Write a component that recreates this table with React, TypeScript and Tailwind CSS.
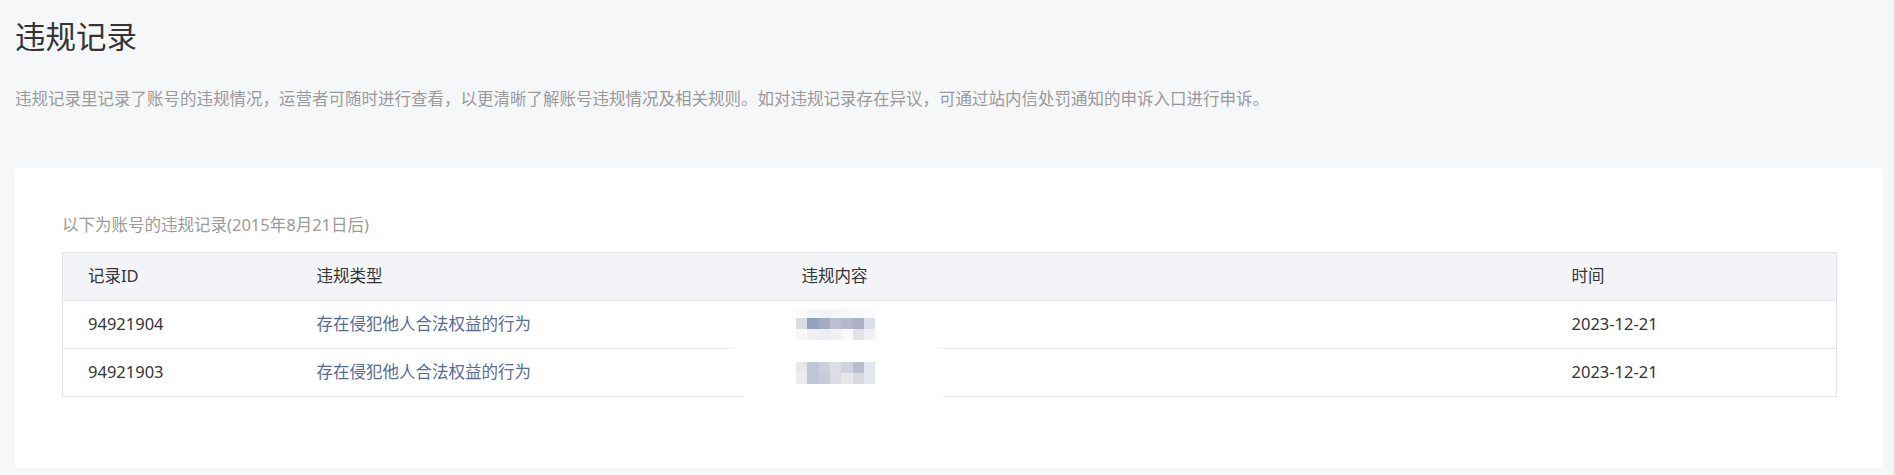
import React from "react";

const mosaic1: string[][] = [
  ["#fbfbfc", "#f5f5f8", "#f2f2f5", "#f5f5f7", "#f7f7f9", "#f9f9fa", "#fbfbfd"],
  ["#dcdce3", "#95a2bf", "#a7abc1", "#bcbfd0", "#b4b8cb", "#aeb2c3", "#dce0eb"],
  ["#f8f8f9", "#eef0f4", "#edeef2", "#eff0f3", "#fafafb", "#e3e4e9", "#eef0f5"],
];
const mosaic2: string[][] = [
  ["#e8e8ec", "#c0c6d8", "#cdd0dc", "#dcdde6", "#d0d3de", "#b9bdcc", "#e3e7f0"],
  ["#ececef", "#c0c4d6", "#c8cad8", "#d9dbe5", "#e6e7ec", "#d9dae1", "#e2e6ef"],
];

function Mosaic({ rows, heights }: { rows: string[][]; heights: number[] }) {
  const bw = 11.3;
  const total = heights.reduce((a, b) => a + b, 0);
  let y = 0;
  return (
    <svg width={Math.round(bw * 7)} height={total} className="block" shapeRendering="crispEdges">
      {rows.map((r, ri) => {
        const yy = y;
        y += heights[ri];
        return r.map((c, ci) => (
          <rect key={ri + "-" + ci} x={ci * bw} y={yy} width={bw + 0.5} height={heights[ri]} fill={c} />
        ));
      })}
    </svg>
  );
}

const records = [
  { id: "94921904", type: "存在侵犯他人合法权益的行为", time: "2023-12-21", m: 1 },
  { id: "94921903", type: "存在侵犯他人合法权益的行为", time: "2023-12-21", m: 2 },
];

export default function App() {
  return (
    <div className="min-h-[475px] w-full bg-[#f6f7f9] border-r-2 border-[#e9eaed] pl-[15px] pr-[10px] font-['Noto_Sans','Noto_Sans_CJK_SC',sans-serif]">
      <h1 className="pt-[14px] text-[30.5px] leading-[44px] font-normal text-[#353535]">违规记录</h1>
      <p className="mt-[29px] text-[16.5px] leading-[24px] text-[#9a9a9a]">
        违规记录里记录了账号的违规情况，运营者可随时进行查看，以更清晰了解账号违规情况及相关规则。如对违规记录存在异议，可通过站内信处罚通知的申诉入口进行申诉。
      </p>
      <div className="mt-[57px] bg-white rounded-[4px] pl-[47px] pr-[46px] pt-[45px] pb-[71px]">
        <p className="text-[16.5px] leading-[24px] text-[#9a9a9a]">以下为账号的违规记录(2015年8月21日后)</p>
        <table className="mt-[15px] w-full table-fixed border-collapse border border-[#e2e3e7] text-[16.5px] text-[#353535]">
          <colgroup>
            <col className="w-[229px]" />
            <col className="w-[485px]" />
            <col className="w-[770px]" />
            <col />
          </colgroup>
          <thead>
            <tr className="bg-[#f3f4f7] border-b border-[#e5e6ea]">
              <th className="h-[48px] pl-[25px] text-left font-normal">记录ID</th>
              <th className="h-[48px] pl-[25px] text-left font-normal">违规类型</th>
              <th className="h-[48px] pl-[25px] text-left font-normal">违规内容</th>
              <th className="h-[48px] pl-[25px] text-left font-normal">时间</th>
            </tr>
          </thead>
          <tbody>
            {records.map((r) => (
              <tr key={r.id} className="border-b border-[#e5e6ea]">
                <td className="h-[48px] pl-[25px]">{r.id}</td>
                <td className="h-[48px] pl-[25px] text-[#576b95]">{r.type}</td>
                <td className="relative h-[48px] pl-[19px]">
                  {r.m === 1 ? (
                    <Mosaic rows={mosaic1} heights={[9, 11, 11]} />
                  ) : (
                    <Mosaic rows={mosaic2} heights={[11, 11]} />
                  )}
                  {r.m === 1 ? (
                    <div className="absolute left-[-66px] bottom-[-3px] h-[11px] w-[250px] rounded-[50%] bg-white" />
                  ) : (
                    <div className="absolute left-[-36px] bottom-[-5px] h-[11px] w-[204px] rounded-[50%] bg-white" />
                  )}
                </td>
                <td className="h-[48px] pl-[25px]">{r.time}</td>
              </tr>
            ))}
          </tbody>
        </table>
      </div>
    </div>
  );
}
